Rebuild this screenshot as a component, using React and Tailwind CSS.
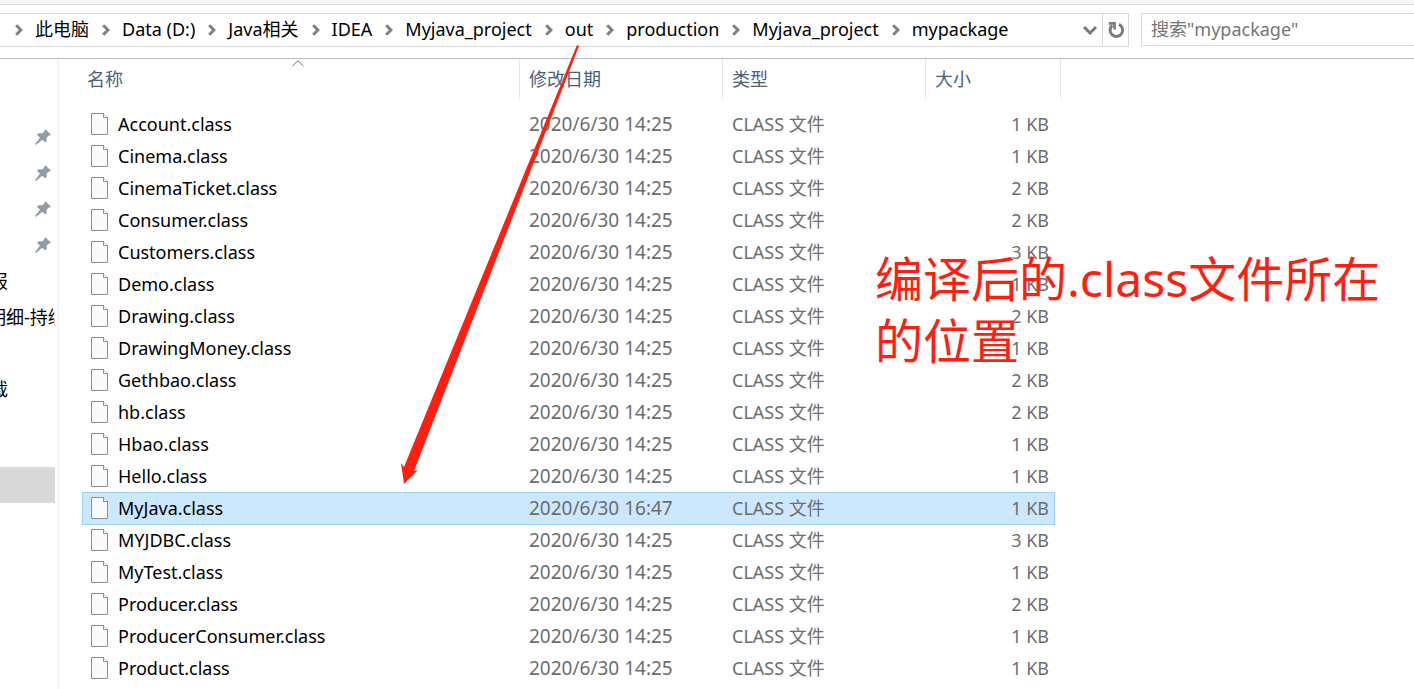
import React from 'react';

const crumbs = ['此电脑', 'Data (D:)', 'Java相关', 'IDEA', 'Myjava_project', 'out', 'production', 'Myjava_project', 'mypackage'];

const files = [
    { name: 'Account.class', date: '2020/6/30 14:25', size: '1 KB' },
    { name: 'Cinema.class', date: '2020/6/30 14:25', size: '1 KB' },
    { name: 'CinemaTicket.class', date: '2020/6/30 14:25', size: '2 KB' },
    { name: 'Consumer.class', date: '2020/6/30 14:25', size: '2 KB' },
    { name: 'Customers.class', date: '2020/6/30 14:25', size: '3 KB' },
    { name: 'Demo.class', date: '2020/6/30 14:25', size: '1 KB' },
    { name: 'Drawing.class', date: '2020/6/30 14:25', size: '2 KB' },
    { name: 'DrawingMoney.class', date: '2020/6/30 14:25', size: '1 KB' },
    { name: 'Gethbao.class', date: '2020/6/30 14:25', size: '2 KB' },
    { name: 'hb.class', date: '2020/6/30 14:25', size: '2 KB' },
    { name: 'Hbao.class', date: '2020/6/30 14:25', size: '1 KB' },
    { name: 'Hello.class', date: '2020/6/30 14:25', size: '1 KB' },
    { name: 'MyJava.class', date: '2020/6/30 16:47', size: '1 KB', selected: true },
    { name: 'MYJDBC.class', date: '2020/6/30 14:25', size: '3 KB' },
    { name: 'MyTest.class', date: '2020/6/30 14:25', size: '1 KB' },
    { name: 'Producer.class', date: '2020/6/30 14:25', size: '2 KB' },
    { name: 'ProducerConsumer.class', date: '2020/6/30 14:25', size: '1 KB' },
    { name: 'Product.class', date: '2020/6/30 14:25', size: '1 KB' },
];

const Chevron = () => (
    <svg width="8" height="12" viewBox="0 0 8 12" className="shrink-0" fill="none" stroke="#808080" strokeWidth="3">
        <path d="M1.2 1.2 L6 6 L1.2 10.8" />
    </svg>
);

const Pin = () => (
    <svg width="16" height="16" viewBox="0 0 16 16" className="shrink-0" fill="#929ca5">
        <path d="M10.4 0.2 L15.8 5.4 L14.8 6.8 L13.6 6.6 L11.4 9.2 C12 10.8 11.6 12.4 10.6 13.6 L7.2 10.8 L1.6 15.6 L0.2 15.8 L0.4 14.4 L5 8.8 L1.8 5.6 C3.2 4.2 5.2 3.8 7 4.4 L9.4 2.4 L9.2 1.4 Z" />
    </svg>
);

const FileIcon = () => (
    <svg width="17" height="22" viewBox="0 0 17 22" className="shrink-0">
        <path d="M0.5 0.5 H12.5 L16.5 4.5 V21.5 H0.5 Z" fill="#f8f9fa" stroke="#8f8f8f" />
        <path d="M12.5 0.5 V4.5 H16.5" fill="#ffffff" stroke="#8f8f8f" />
    </svg>
);

const AddressBar = () => (
    <div className="flex items-start pt-2 pb-[11px] border-b border-[#bdbdbd]">
        <div className="flex flex-1 h-[34px] border border-l-0 border-[#d9d9d9]">
            <nav className="flex flex-1 items-center gap-3 pl-[15px] whitespace-nowrap">
                {crumbs.map((crumb, i) => (
                    <React.Fragment key={i}>
                        <Chevron />
                        <a href="#" className="pr-px pb-0.5 text-black">{crumb}</a>
                    </React.Fragment>
                ))}
            </nav>
            <button type="button" aria-label="历史记录" className="flex w-6 items-center justify-center">
                <svg width="14" height="10" viewBox="0 0 14 10" fill="none" stroke="#7a7a7a" strokeWidth="3">
                    <path d="M1 2 L7 8 L13 2" />
                </svg>
            </button>
            <button type="button" aria-label="刷新" className="flex w-[26px] items-center justify-center border-l border-[#d9d9d9]">
                <svg width="18" height="18" viewBox="0 0 18 18" fill="none" stroke="#7a7a7a" strokeWidth="3">
                    <path d="M12 3.4 A6.3 6.3 0 1 1 5.2 4.4" />
                    <path d="M1.8 2.4 H7.6 V8.6" strokeWidth="2.6" />
                </svg>
            </button>
        </div>
        <input
            type="text"
            aria-label="搜索"
            placeholder={'搜索"mypackage"'}
            className="ml-3 h-[33px] w-[273px] border border-r-0 border-[#d9d9d9] px-[9px] pb-0.5 placeholder:text-[#757575] outline-none"
        />
    </div>
);

const Sidebar = () => (
    <aside className="w-[59px] shrink-0 border-r-2 border-[#f5f5f5] pr-0.5 pt-[60px]">
        <ul className="overflow-hidden whitespace-nowrap text-black">
            {[1, 2, 3, 4].map((n) => (
                <li key={n} className="flex h-9 items-center justify-end pr-1"><Pin /></li>
            ))}
            <li className="h-9 -ml-2.5 leading-9">报</li>
            <li className="h-9 -ml-3 leading-9">明细-持续</li>
            <li className="h-9"></li>
            <li className="h-9 -ml-2.5 leading-9">载</li>
            <li className="mt-[60px] h-9 bg-[#d9d9d9]"></li>
        </ul>
    </aside>
);

const FileTable = () => (
    <table className="ml-[23px] w-[979px] table-fixed border-separate border-spacing-0 text-left">
        <colgroup>
            <col className="w-[438px]" />
            <col className="w-[203px]" />
            <col className="w-[203px]" />
            <col className="w-[129px]" />
            <col className="w-[6px]" />
        </colgroup>
        <thead className="text-[#4c607a]">
            <tr className="h-10">
                <th className="relative border-r border-[#e5e5e5] pl-[5px] font-normal">
                    名称
                    <svg width="12" height="7" viewBox="0 0 12 7" className="absolute left-[210px] top-px" fill="none" stroke="#6b6b6b">
                        <path d="M0.5 6 L6 0.8 L11.5 6" />
                    </svg>
                </th>
                <th className="border-r border-[#e5e5e5] pl-[9px] font-normal">修改日期</th>
                <th className="border-r border-[#e5e5e5] pl-[9px] font-normal">类型</th>
                <th colSpan="2" className="border-r border-[#e5e5e5] pl-[9px] font-normal">大小</th>
            </tr>
        </thead>
        <tbody className="text-[#6d6d6d]">
            <tr className="h-[9px]"><td colSpan="5"></td></tr>
            {files.map((file) => {
                const cell = file.selected ? 'bg-[#cce8ff] border-t border-[#99d1ff] pb-px shadow-[0_1px_0_#99d1ff]' : '';
                return (
                    <tr key={file.name} className="h-8 leading-6">
                        <td className={`${cell} ${file.selected ? 'border-l pl-2' : 'pl-[9px]'}`}>
                            <div className="flex items-center gap-[10px] text-black">
                                <FileIcon />
                                {file.name}
                            </div>
                        </td>
                        <td className={`${cell} pl-[9px] text-[19px]`}>{file.date}</td>
                        <td className={`${cell} pl-[9px]`}>CLASS 文件</td>
                        <td className={`${cell} text-right ${file.selected ? 'border-r pr-[5px]' : 'pr-[6px]'}`}>{file.size}</td>
                        <td></td>
                    </tr>
                );
            })}
        </tbody>
    </table>
);

const App = () => {
    return (
        <div className="relative flex min-h-screen flex-col overflow-hidden bg-white text-[18px] leading-6 font-['Noto_Sans','Noto_Sans_CJK_SC',sans-serif]">
            <div className="h-[5px] border-b border-[#d9dadb] bg-[#f5f6f7]"></div>
            <AddressBar />
            <div className="flex flex-1">
                <Sidebar />
                <main className="flex-1">
                    <FileTable />
                </main>
            </div>

            {/* red marks drawn over the window */}
            <svg width="180" height="440" viewBox="400 45 180 440" className="pointer-events-none absolute left-[400px] top-[45px]" fill="#ff1e10">
                <polygon points="577,45 404,467 401,463 404,484 418,470 414,471 579,46" />
            </svg>
            <p className="pointer-events-none absolute left-[875px] top-[248px] w-[520px] text-[48px] leading-[62px] text-[#ff1e10]">
                编译后的.class文件所在的位置
            </p>
        </div>
    );
};

export default App;
